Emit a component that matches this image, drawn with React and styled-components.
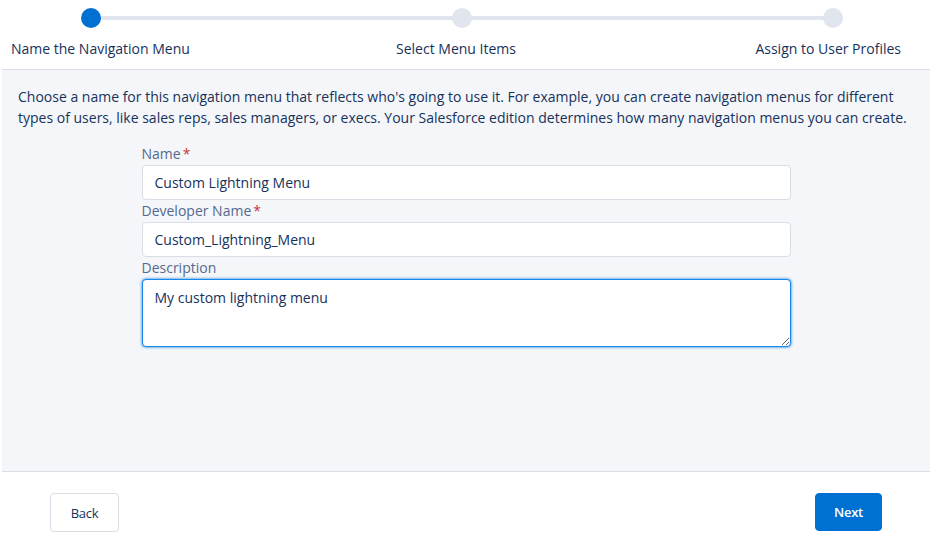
import React, { useState } from 'react';
import styled, { createGlobalStyle } from 'styled-components';

const GlobalStyle = createGlobalStyle`
  html, body {
    margin: 0;
    padding: 0;
    background: #ffffff;
  }
  body {
    font-family: "Open Sans", "Liberation Sans", sans-serif;
    color: #16325c;
  }
`;

const steps = ['Name the Navigation Menu', 'Select Menu Items', 'Assign to User Profiles'];

const Root = styled.div`
  width: 941px;
  height: 548px;
  display: flex;
  flex-direction: column;
  background: #ffffff;
`;

const Header = styled.div`
  height: 69px;
  padding: 0 40px 0 11px;
  display: flex;
  flex-direction: column;
  box-sizing: border-box;
`;

const Track = styled.div`
  position: relative;
  height: 36px;
  margin: 0 58px 0 70px;
  display: flex;
  align-items: center;
  justify-content: space-between;
`;

const Line = styled.div`
  position: absolute;
  left: 10px;
  right: 10px;
  top: 16px;
  height: 4px;
  background: #e0e5ee;
`;

const Dot = styled.span`
  position: relative;
  width: 20px;
  height: 20px;
  border-radius: 50%;
  background: ${(p) => (p.active ? '#0070d2' : '#e0e5ee')};
`;

const Labels = styled.div`
  display: grid;
  grid-template-columns: 1fr auto 1fr;
  align-items: center;
  height: 25px;
  font-size: 14px;
  color: #16325c;
`;

const StepLabel = styled.span`
  justify-self: ${(p) => p.align};
  white-space: nowrap;
`;

const Body = styled.div`
  flex: 0 0 auto;
  height: 403px;
  margin: 0 11px 0 2px;
  background: #f4f6f9;
  border-top: 1px solid #d8dde6;
  border-bottom: 1px solid #d8dde6;
  box-sizing: border-box;
  padding: 16px 16px 0 16px;
`;

const Intro = styled.p`
  margin: 0;
  font-size: 14px;
  line-height: 21px;
  color: #16325c;
`;

const Form = styled.div`
  width: 649px;
  margin: 15px auto 0;
  display: flex;
  flex-direction: column;
`;

const Label = styled.label`
  font-size: 14px;
  line-height: 22px;
  color: #54698d;
  display: block;
`;

const Req = styled.abbr`
  color: #c23934;
  text-decoration: none;
  margin-left: 2px;
`;

const Input = styled.input`
  box-sizing: border-box;
  width: 100%;
  height: 35px;
  border: 1px solid #d8dde6;
  border-radius: 4px;
  background: #ffffff;
  padding: 0 12px;
  font-family: inherit;
  font-size: 14px;
  color: #16325c;
  outline: none;
`;

const TextArea = styled.textarea`
  box-sizing: border-box;
  width: 100%;
  height: 68px;
  border: 1px solid #1589ee;
  box-shadow: 0 0 3px #0070d2;
  border-radius: 4px;
  background: #ffffff;
  padding: 8px 12px;
  font-family: inherit;
  font-size: 14px;
  line-height: 20px;
  color: #16325c;
  outline: none;
  resize: vertical;
`;

const Footer = styled.div`
  flex: 1;
  display: flex;
  justify-content: space-between;
  align-items: flex-start;
  padding: 21px 59px 0 50px;
`;

const Button = styled.button`
  height: ${(p) => (p.brand ? '38px' : '39px')};
  padding: 0;
  width: ${(p) => (p.brand ? '67px' : '69px')};
  border-radius: 4px;
  border: 1px solid ${(p) => (p.brand ? '#0070d2' : '#d8dde6')};
  background: ${(p) => (p.brand ? '#0070d2' : '#ffffff')};
  color: ${(p) => (p.brand ? '#ffffff' : '#16325c')};
  font-family: inherit;
  font-size: 13px;
  font-weight: ${(p) => (p.brand ? 600 : 400)};
  letter-spacing: -0.3px;
  cursor: pointer;
`;

const Field = ({ label, required, children }) => (
  <>
    <Label>
      {label}
      {required && <Req title="required">*</Req>}
    </Label>
    {children}
  </>
);

const aligns = ['start', 'center', 'end'];

const App = () => {
  const [name, setName] = useState('Custom Lightning Menu');
  const [devName, setDevName] = useState('Custom_Lightning_Menu');
  const [desc, setDesc] = useState('My custom lightning menu');

  return (
    <>
      <GlobalStyle />
      <Root>
        <Header>
          <Track>
            <Line />
            {steps.map((s, i) => (
              <Dot key={s} active={i === 0} />
            ))}
          </Track>
          <Labels>
            {steps.map((s, i) => (
              <StepLabel key={s} align={aligns[i]}>
                {s}
              </StepLabel>
            ))}
          </Labels>
        </Header>

        <Body>
          <Intro>
            Choose a name for this navigation menu that reflects who's going to use it. For example, you can create
            navigation menus for different types of users, like sales reps, sales managers, or execs. Your Salesforce
            edition determines how many navigation menus you can create.
          </Intro>
          <Form>
            <Field label="Name" required>
              <Input value={name} onChange={(e) => setName(e.target.value)} />
            </Field>
            <Field label="Developer Name" required>
              <Input value={devName} onChange={(e) => setDevName(e.target.value)} />
            </Field>
            <Field label="Description">
              <TextArea value={desc} onChange={(e) => setDesc(e.target.value)} />
            </Field>
          </Form>
        </Body>

        <Footer>
          <Button>Back</Button>
          <Button brand>Next</Button>
        </Footer>
      </Root>
    </>
  );
};

export default App;
